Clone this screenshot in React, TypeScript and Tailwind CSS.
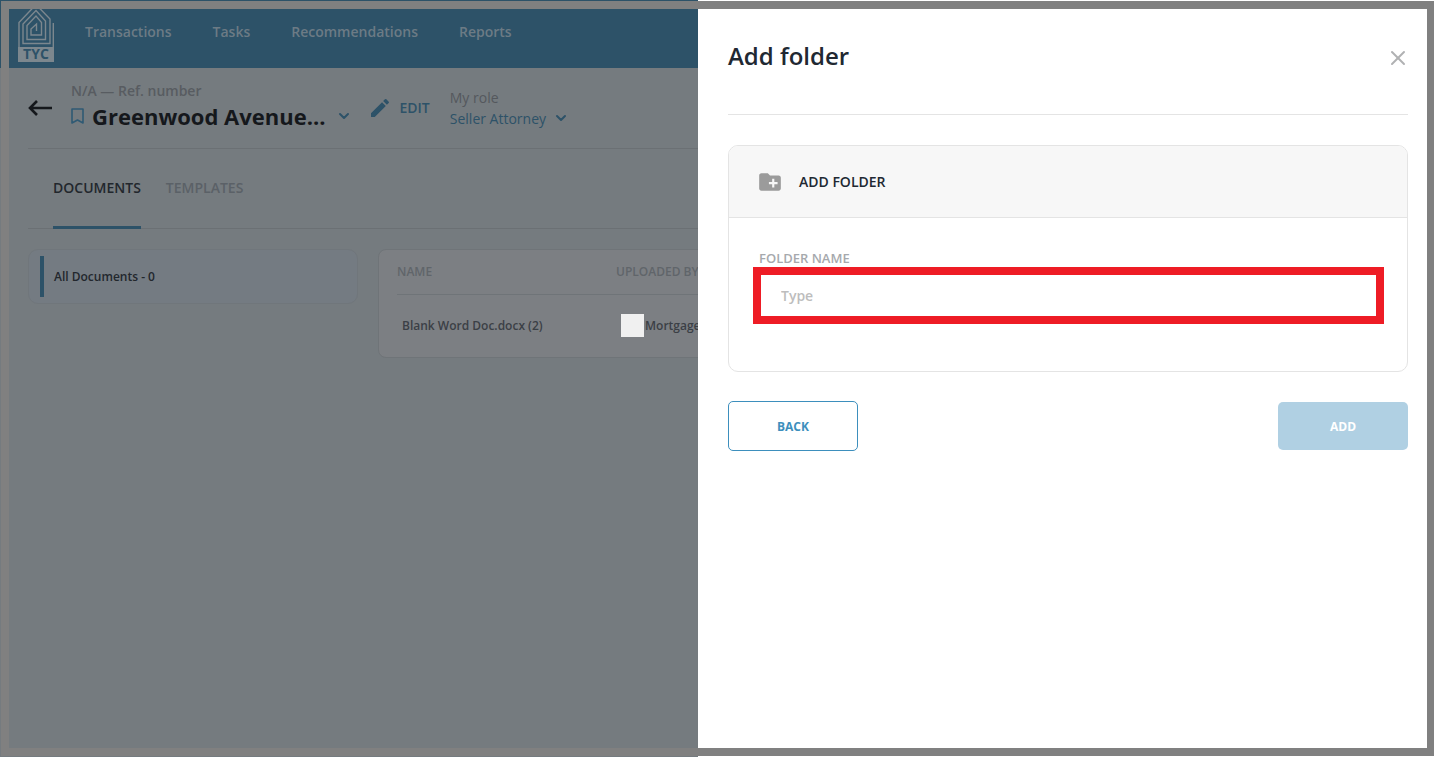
import { ChevronDown, X } from "lucide-react";
import { MdCreateNewFolder, MdEdit } from "react-icons/md";

const navLinks = ["Transactions", "Tasks", "Recommendations", "Reports"];

const Logo = () => (
  <svg width="36" height="58" viewBox="0 0 36 58" fill="none" aria-label="TYC">
    <g stroke="#7c878e" strokeWidth="1.4">
      <path d="M1 43V18.500L18 0.500L32 15V39.500H5V20L18 6.500L27.500 17V35.500H9V21.500L18 12L23.500 18.500V31H13V25L18.500 20V27" />
      <path d="M35.300 19V45" />
    </g>
    <path d="M0 43H36V58H0Z" fill="#7c878e" />
    <text
      x="18"
      y="55"
      textAnchor="middle"
      fontSize="14"
      fontWeight="700"
      fill="#2d5268"
      className="font-['Open_Sans',sans-serif]"
    >
      TYC
    </text>
  </svg>
);

const BackArrow = () => (
  <svg width="24" height="16" viewBox="0 0 24 16" fill="none" stroke="#15181c" strokeWidth="2.6">
    <path d="M24 8H2M9 1L2 8L9 15" />
  </svg>
);

const Bookmark = () => (
  <svg width="13" height="16" viewBox="0 0 13 16" fill="none" stroke="#2f5a74" strokeWidth="1.6">
    <path d="M1 1H12V15L6.500 12L1 15Z" strokeLinejoin="round" />
  </svg>
);

const TopBar = () => (
  <header className="flex h-[68px] items-start bg-[#2d5268] pl-[18px] pt-1">
    <a href="#home">
      <Logo />
    </a>
    <nav className="ml-[31px] flex gap-[41px] pt-[18px] text-sm leading-5 font-semibold text-[#6c7b85]">
      {navLinks.map((link) => (
        <a key={link} href={`#${link.toLowerCase()}`}>
          {link}
        </a>
      ))}
    </nav>
  </header>
);

const TransactionHeader = () => (
  <div className="flex h-[81px] items-center border-b border-[#6b7074]">
    <button type="button" aria-label="Go back">
      <BackArrow />
    </button>
    <div className="ml-[19px] shrink-0 pb-1">
      <p className="text-sm leading-5 font-semibold text-[#585c61]">N/A — Ref. number</p>
      <div className="flex items-center gap-2">
        <Bookmark />
        <h1 className="text-[22px] leading-[30px] font-bold text-[#15181c]">Greenwood Avenue...</h1>
        <button type="button" aria-label="Switch transaction" className="ml-0.5">
          <ChevronDown className="size-4 text-[#2d5268]" strokeWidth={3} />
        </button>
      </div>
    </div>
    <button
      type="button"
      className="ml-4 flex shrink-0 items-center gap-2 text-sm font-semibold text-[#2d5268]"
    >
      <MdEdit className="size-6" />
      EDIT
    </button>
    <div className="ml-5 shrink-0 pb-px text-sm leading-[21px]">
      <label htmlFor="role" className="block text-[#54585d]">
        My role
      </label>
      <div className="flex items-center">
        <select id="role" className="appearance-none text-[#2d5268]">
          <option>Seller Attorney</option>
        </select>
        <ChevronDown className="ml-1.5 size-4 text-[#2d5268]" strokeWidth={3} />
      </div>
    </div>
  </div>
);

const Tabs = () => (
  <div className="flex h-20 gap-[25px] border-b border-[#6b7074] pl-[25px] text-sm font-semibold">
    <button type="button" className="-mb-px border-b-3 border-[#2d5268] text-[#22272d]">
      DOCUMENTS
    </button>
    <button type="button" className="-mb-px border-b-3 border-transparent text-[#5b6167]">
      TEMPLATES
    </button>
  </div>
);

const DocumentsTable = () => (
  <div className="h-[109px] w-[1000px] shrink-0 rounded-lg border border-[#6f7478] bg-[#7c7f83] px-[18px]">
    <table className="w-full table-fixed text-left text-xs">
      <thead>
        <tr className="h-11 border-b border-[#6f7478] text-[#60656a]">
          <th className="w-[219px] font-semibold">NAME</th>
          <th className="font-semibold">UPLOADED BY</th>
        </tr>
      </thead>
      <tbody>
        <tr className="h-[63px] font-semibold text-[#3b4046]">
          <td className="pl-[5px]">Blank Word Doc.docx (2)</td>
          <td className="pl-[5px]">
            <div className="flex items-center gap-px">
              <span className="size-[23px] bg-[#f0f0f0]" />
              Mortgage
            </div>
          </td>
        </tr>
      </tbody>
    </table>
  </div>
);

const AddFolderPanel = () => (
  <aside className="w-[736px] shrink-0 bg-white pr-[26px] pl-[30px]">
    <div className="flex h-[115px] items-center justify-between border-b border-[#e4e4e4]">
      <h2 className="pb-0.5 text-2xl font-semibold text-[#212832]">Add folder</h2>
      <button type="button" aria-label="Close" className="-mr-0.5 pt-0.5">
        <X className="size-6 text-[#b0b1b3]" />
      </button>
    </div>

    <form className="mt-[30px]">
      <div className="overflow-hidden rounded-[10px] border border-[#e4e4e4]">
        <div className="flex h-[72px] items-center gap-4 border-b border-[#e4e4e4] bg-[#f7f7f7] pl-7">
          <MdCreateNewFolder className="size-[26px] text-[#9b9b9b]" />
          <h3 className="text-sm font-semibold text-[#212832]">ADD FOLDER</h3>
        </div>
        <div className="pt-8 pr-[23px] pb-[47px] pl-6">
          <label
            htmlFor="folder-name"
            className="block pl-1.5 text-[13px] leading-[17px] font-semibold text-[#a6a9ad]"
          >
            FOLDER NAME
          </label>
          <input
            id="folder-name"
            type="text"
            placeholder="Type"
            className="block h-[57px] w-full border-8 border-[#ee1c25] px-5 text-sm font-semibold text-[#212832] placeholder:text-[#bdbdbd]"
          />
        </div>
      </div>

      <div className="mt-[29px] flex items-center justify-between text-xs font-bold">
        <button
          type="button"
          className="h-[50px] w-[130px] rounded-[5px] border border-[#3d8fbd] pt-0.5 text-[#3d8fbd]"
        >
          BACK
        </button>
        <button type="submit" className="h-12 w-[130px] rounded-[5px] bg-[#b0d0e3] pt-0.5 text-white">
          ADD
        </button>
      </div>
    </form>
  </aside>
);

const App = () => (
  <div className="relative flex min-h-screen font-['Open_Sans',sans-serif]">
    <div className="min-w-0 flex-1 overflow-hidden bg-[#757b7f]">
      <TopBar />
      <main className="pl-7">
        <TransactionHeader />
        <Tabs />
        <div className="mt-5 flex items-start gap-5">
          <div className="w-[330px] shrink-0 rounded-[10px] border border-[#70767b] bg-[#747b82] px-[11px] py-1.5">
            <button
              type="button"
              className="block h-[41px] border-l-4 border-[#2d5268] pl-2.5 text-xs font-semibold text-[#22272d]"
            >
              All Documents - 0
            </button>
          </div>
          <DocumentsTable />
        </div>
      </main>
    </div>
    <AddFolderPanel />
    <div className="pointer-events-none absolute inset-px right-0 border-8 border-r-[7px] border-[#808080]" />
  </div>
);

export default App;
